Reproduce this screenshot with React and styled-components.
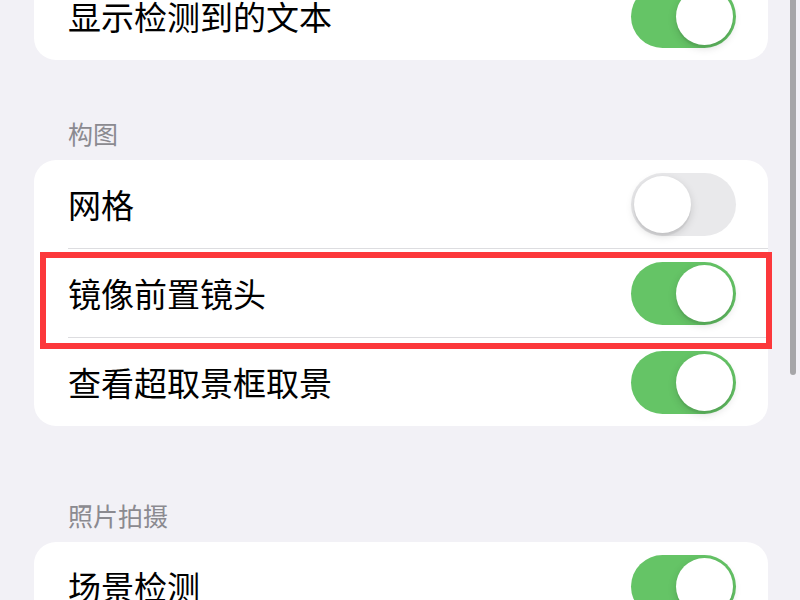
import React, { useState } from 'react';
import styled, { createGlobalStyle } from 'styled-components';

const GlobalStyle = createGlobalStyle`
  html, body {
    margin: 0;
    padding: 0;
    background: #f2f1f6;
    overflow: hidden;
  }
  body {
    font-family: "Noto Sans CJK SC", "Noto Sans", sans-serif;
  }
`;

const sections = [
  {
    id: 'top',
    rows: [{ label: '显示检测到的文本', on: true }],
  },
  {
    id: 'composition',
    title: '构图',
    gapTop: 58,
    rows: [
      { label: '网格', on: false },
      { label: '镜像前置镜头', on: true, marked: true },
      { label: '查看超取景框取景', on: true },
    ],
  },
  {
    id: 'capture',
    title: '照片拍摄',
    gapTop: 74,
    rows: [{ label: '场景检测', on: true }],
  },
];

const Toggle = ({ on }) => {
  const [checked, setChecked] = useState(on);
  return (
    <Track $on={checked} onClick={() => setChecked(!checked)}>
      <Knob $on={checked} />
    </Track>
  );
};

const App = () => (
  <>
    <GlobalStyle />
    <Page>
      {sections.map(section => (
        <Section key={section.id}>
          {section.title && <Header $gapTop={section.gapTop}>{section.title}</Header>}
          <Card>
            {section.rows.map((row, i) => (
              <Row key={row.label}>
                <RowInner $last={i === section.rows.length - 1}>
                  <Label>{row.label}</Label>
                  <Toggle on={row.on} />
                </RowInner>
                {row.marked && <Highlight />}
              </Row>
            ))}
          </Card>
        </Section>
      ))}
    </Page>
    <ScrollIndicator />
  </>
);

const Page = styled.div`
  margin-top: -28px;
  padding: 0 32px 0 34px;
`;

const Section = styled.section`
  display: flex;
  flex-direction: column;
`;

const Header = styled.div`
  margin: ${p => p.$gapTop}px 0 12px 34px;
  font-size: 25px;
  line-height: 30px;
  color: #8b8a90;
`;

const Card = styled.div`
  background: #fff;
  border-radius: 22px;
`;

const Row = styled.div`
  position: relative;
  padding-left: 34px;
`;

// content-box: separator adds 1px under the 88px row
const RowInner = styled.div`
  display: flex;
  align-items: center;
  justify-content: space-between;
  height: 88px;
  padding-right: 32px;
  border-bottom: ${p => (p.$last ? 'none' : '1px solid #dddde0')};
`;

const Label = styled.span`
  font-size: 33px;
  line-height: 40px;
  color: #000;
`;

const Track = styled.div`
  position: relative;
  flex: none;
  width: 105px;
  height: 63px;
  border-radius: 32px;
  background: ${p => (p.$on ? '#65c466' : '#e9e9eb')};
  cursor: pointer;
`;

const Knob = styled.div`
  position: absolute;
  top: 3px;
  left: ${p => (p.$on ? '45px' : '3px')};
  width: 57px;
  height: 57px;
  border-radius: 50%;
  background: #fff;
  box-shadow: 0 3px 8px rgba(0, 0, 0, 0.15), 0 3px 1px rgba(0, 0, 0, 0.06);
`;

const Highlight = styled.div`
  position: absolute;
  top: 3px;
  left: 6px;
  right: -4px;
  height: 97px;
  box-sizing: border-box;
  border: 6px solid #fc383b;
  pointer-events: none;
`;

const ScrollIndicator = styled.div`
  position: fixed;
  top: 0;
  right: 4px;
  width: 6px;
  height: 375px;
  border-radius: 0 0 3px 3px;
  background: #a6a6a8;
`;

export default App;
